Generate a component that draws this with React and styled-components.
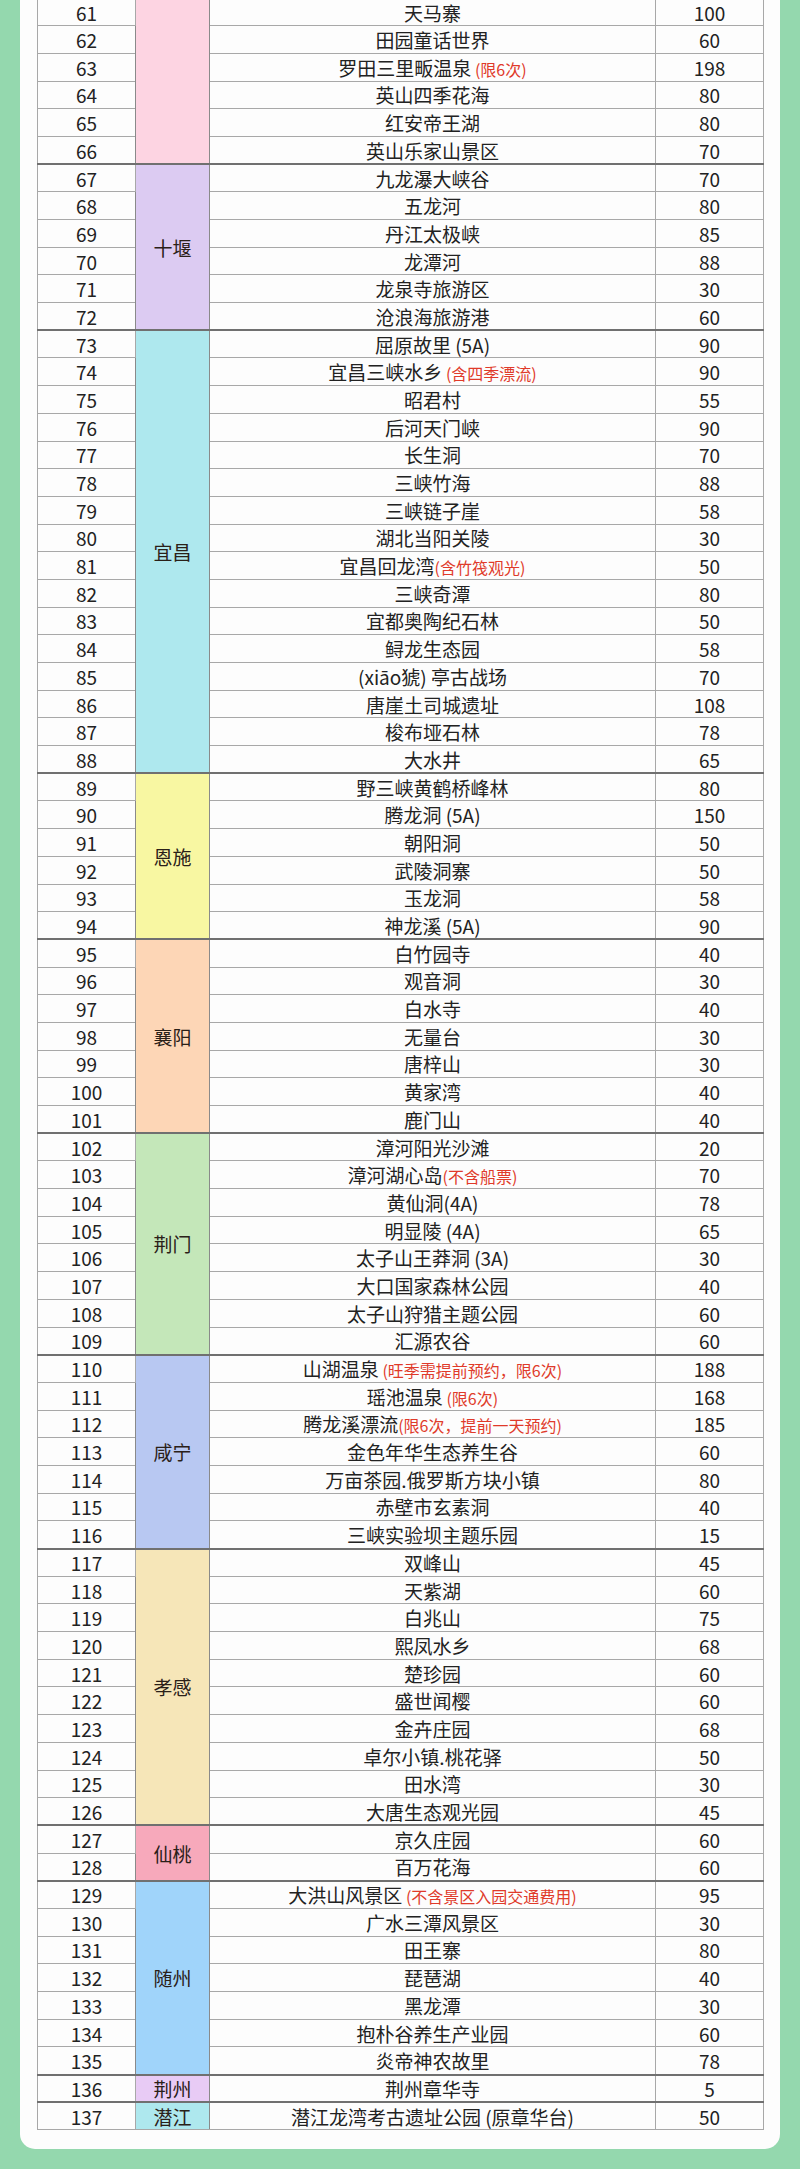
import React from 'react';
import styled, { createGlobalStyle } from 'styled-components';

const groups = [
  { name: '', color: '#fdd4e2', items: [
    [61, '天马寨', '', 100], [62, '田园童话世界', '', 60], [63, '罗田三里畈温泉', ' (限6次)', 198],
    [64, '英山四季花海', '', 80], [65, '红安帝王湖', '', 80], [66, '英山乐家山景区', '', 70],
  ] },
  { name: '十堰', color: '#dccbf2', items: [
    [67, '九龙瀑大峡谷', '', 70], [68, '五龙河', '', 80], [69, '丹江太极峡', '', 85],
    [70, '龙潭河', '', 88], [71, '龙泉寺旅游区', '', 30], [72, '沧浪海旅游港', '', 60],
  ] },
  { name: '宜昌', color: '#aee8ee', items: [
    [73, '屈原故里 (5A)', '', 90], [74, '宜昌三峡水乡', ' (含四季漂流)', 90], [75, '昭君村', '', 55],
    [76, '后河天门峡', '', 90], [77, '长生洞', '', 70], [78, '三峡竹海', '', 88],
    [79, '三峡链子崖', '', 58], [80, '湖北当阳关陵', '', 30], [81, '宜昌回龙湾', '(含竹筏观光)', 50],
    [82, '三峡奇潭', '', 80], [83, '宜都奥陶纪石林', '', 50], [84, '鲟龙生态园', '', 58],
    [85, '(xiāo猇) 亭古战场', '', 70], [86, '唐崖土司城遗址', '', 108], [87, '梭布垭石林', '', 78],
    [88, '大水井', '', 65],
  ] },
  { name: '恩施', color: '#f8f7a2', items: [
    [89, '野三峡黄鹤桥峰林', '', 80], [90, '腾龙洞 (5A)', '', 150], [91, '朝阳洞', '', 50],
    [92, '武陵洞寨', '', 50], [93, '玉龙洞', '', 58], [94, '神龙溪 (5A)', '', 90],
  ] },
  { name: '襄阳', color: '#fdd6b6', items: [
    [95, '白竹园寺', '', 40], [96, '观音洞', '', 30], [97, '白水寺', '', 40], [98, '无量台', '', 30],
    [99, '唐梓山', '', 30], [100, '黄家湾', '', 40], [101, '鹿门山', '', 40],
  ] },
  { name: '荆门', color: '#c4e7b9', items: [
    [102, '漳河阳光沙滩', '', 20], [103, '漳河湖心岛', '(不含船票)', 70], [104, '黄仙洞(4A)', '', 78],
    [105, '明显陵 (4A)', '', 65], [106, '太子山王莽洞 (3A)', '', 30], [107, '大口国家森林公园', '', 40],
    [108, '太子山狩猎主题公园', '', 60], [109, '汇源农谷', '', 60],
  ] },
  { name: '咸宁', color: '#b8c8f2', items: [
    [110, '山湖温泉', ' (旺季需提前预约，限6次)', 188], [111, '瑶池温泉', ' (限6次)', 168],
    [112, '腾龙溪漂流', '(限6次，提前一天预约)', 185], [113, '金色年华生态养生谷', '', 60],
    [114, '万亩茶园.俄罗斯方块小镇', '', 80], [115, '赤壁市玄素洞', '', 40], [116, '三峡实验坝主题乐园', '', 15],
  ] },
  { name: '孝感', color: '#f6e6b8', items: [
    [117, '双峰山', '', 45], [118, '天紫湖', '', 60], [119, '白兆山', '', 75], [120, '熙凤水乡', '', 68],
    [121, '楚珍园', '', 60], [122, '盛世闻樱', '', 60], [123, '金卉庄园', '', 68],
    [124, '卓尔小镇.桃花驿', '', 50], [125, '田水湾', '', 30], [126, '大唐生态观光园', '', 45],
  ] },
  { name: '仙桃', color: '#f7a9bb', items: [
    [127, '京久庄园', '', 60], [128, '百万花海', '', 60],
  ] },
  { name: '随州', color: '#a0d4fa', items: [
    [129, '大洪山风景区', ' (不含景区入园交通费用)', 95], [130, '广水三潭风景区', '', 30],
    [131, '田王寨', '', 80], [132, '琵琶湖', '', 40], [133, '黑龙潭', '', 30],
    [134, '抱朴谷养生产业园', '', 60], [135, '炎帝神农故里', '', 78],
  ] },
  { name: '荆州', color: '#e8cbf5', items: [[136, '荆州章华寺', '', 5]] },
  { name: '潜江', color: '#aee8ee', items: [[137, '潜江龙湾考古遗址公园 (原章华台)', '', 50]] },
];

const GlobalStyle = createGlobalStyle`
  html, body {
    margin: 0;
    padding: 0;
    background: #94d8ae;
  }
  body {
    font-family: "Noto Sans CJK SC", "Noto Sans", sans-serif;
    color: #222;
  }
`;

const Page = styled.div`
  width: 800px;
  padding: 0 20px 19px;
  box-sizing: border-box;
  background: #94d8ae;
`;

const Card = styled.div`
  background: #fdfdfd;
  border-radius: 0 0 15px 15px;
  padding: 0 17px 19px;
  overflow: hidden;
`;

const Table = styled.table`
  width: 726px;
  margin-top: -3px;
  border-collapse: collapse;
  table-layout: fixed;
  font-size: 19px;
  line-height: 1;
`;

const Row = styled.tr`
  height: 27.7px;
  td {
    border-top: ${(p) => (p.$start ? '2px solid #707070' : '1px solid #a8a8a8')};
  }
`;

const Cell = styled.td`
  border: 1px solid #a8a8a8;
  padding: 0;
  text-align: center;
  vertical-align: middle;
  white-space: pre;
`;

const RegionCell = styled(Cell)`
  background: ${(p) => p.$bg};
  border-left-color: #8a8a8a;
  border-right-color: #8a8a8a;
  color: #2a2018;
`;

const Note = styled.span`
  color: #e03a2a;
  font-size: 16px;
`;

export default function App() {
  return (
    <>
      <GlobalStyle />
      <Page>
        <Card>
          <Table>
            <colgroup>
              <col style={{ width: 98 }} />
              <col style={{ width: 74 }} />
              <col style={{ width: 446 }} />
              <col style={{ width: 108 }} />
            </colgroup>
            <tbody>
              {groups.map((g) =>
                g.items.map(([no, name, note, price], i) => (
                  <Row key={no} $start={i === 0}>
                    <Cell>{no}</Cell>
                    {i === 0 && (
                      <RegionCell rowSpan={g.items.length} $bg={g.color}>
                        {g.name}
                      </RegionCell>
                    )}
                    <Cell>
                      {name}
                      {note && <Note>{note}</Note>}
                    </Cell>
                    <Cell>{price}</Cell>
                  </Row>
                ))
              )}
            </tbody>
          </Table>
        </Card>
      </Page>
    </>
  );
}
